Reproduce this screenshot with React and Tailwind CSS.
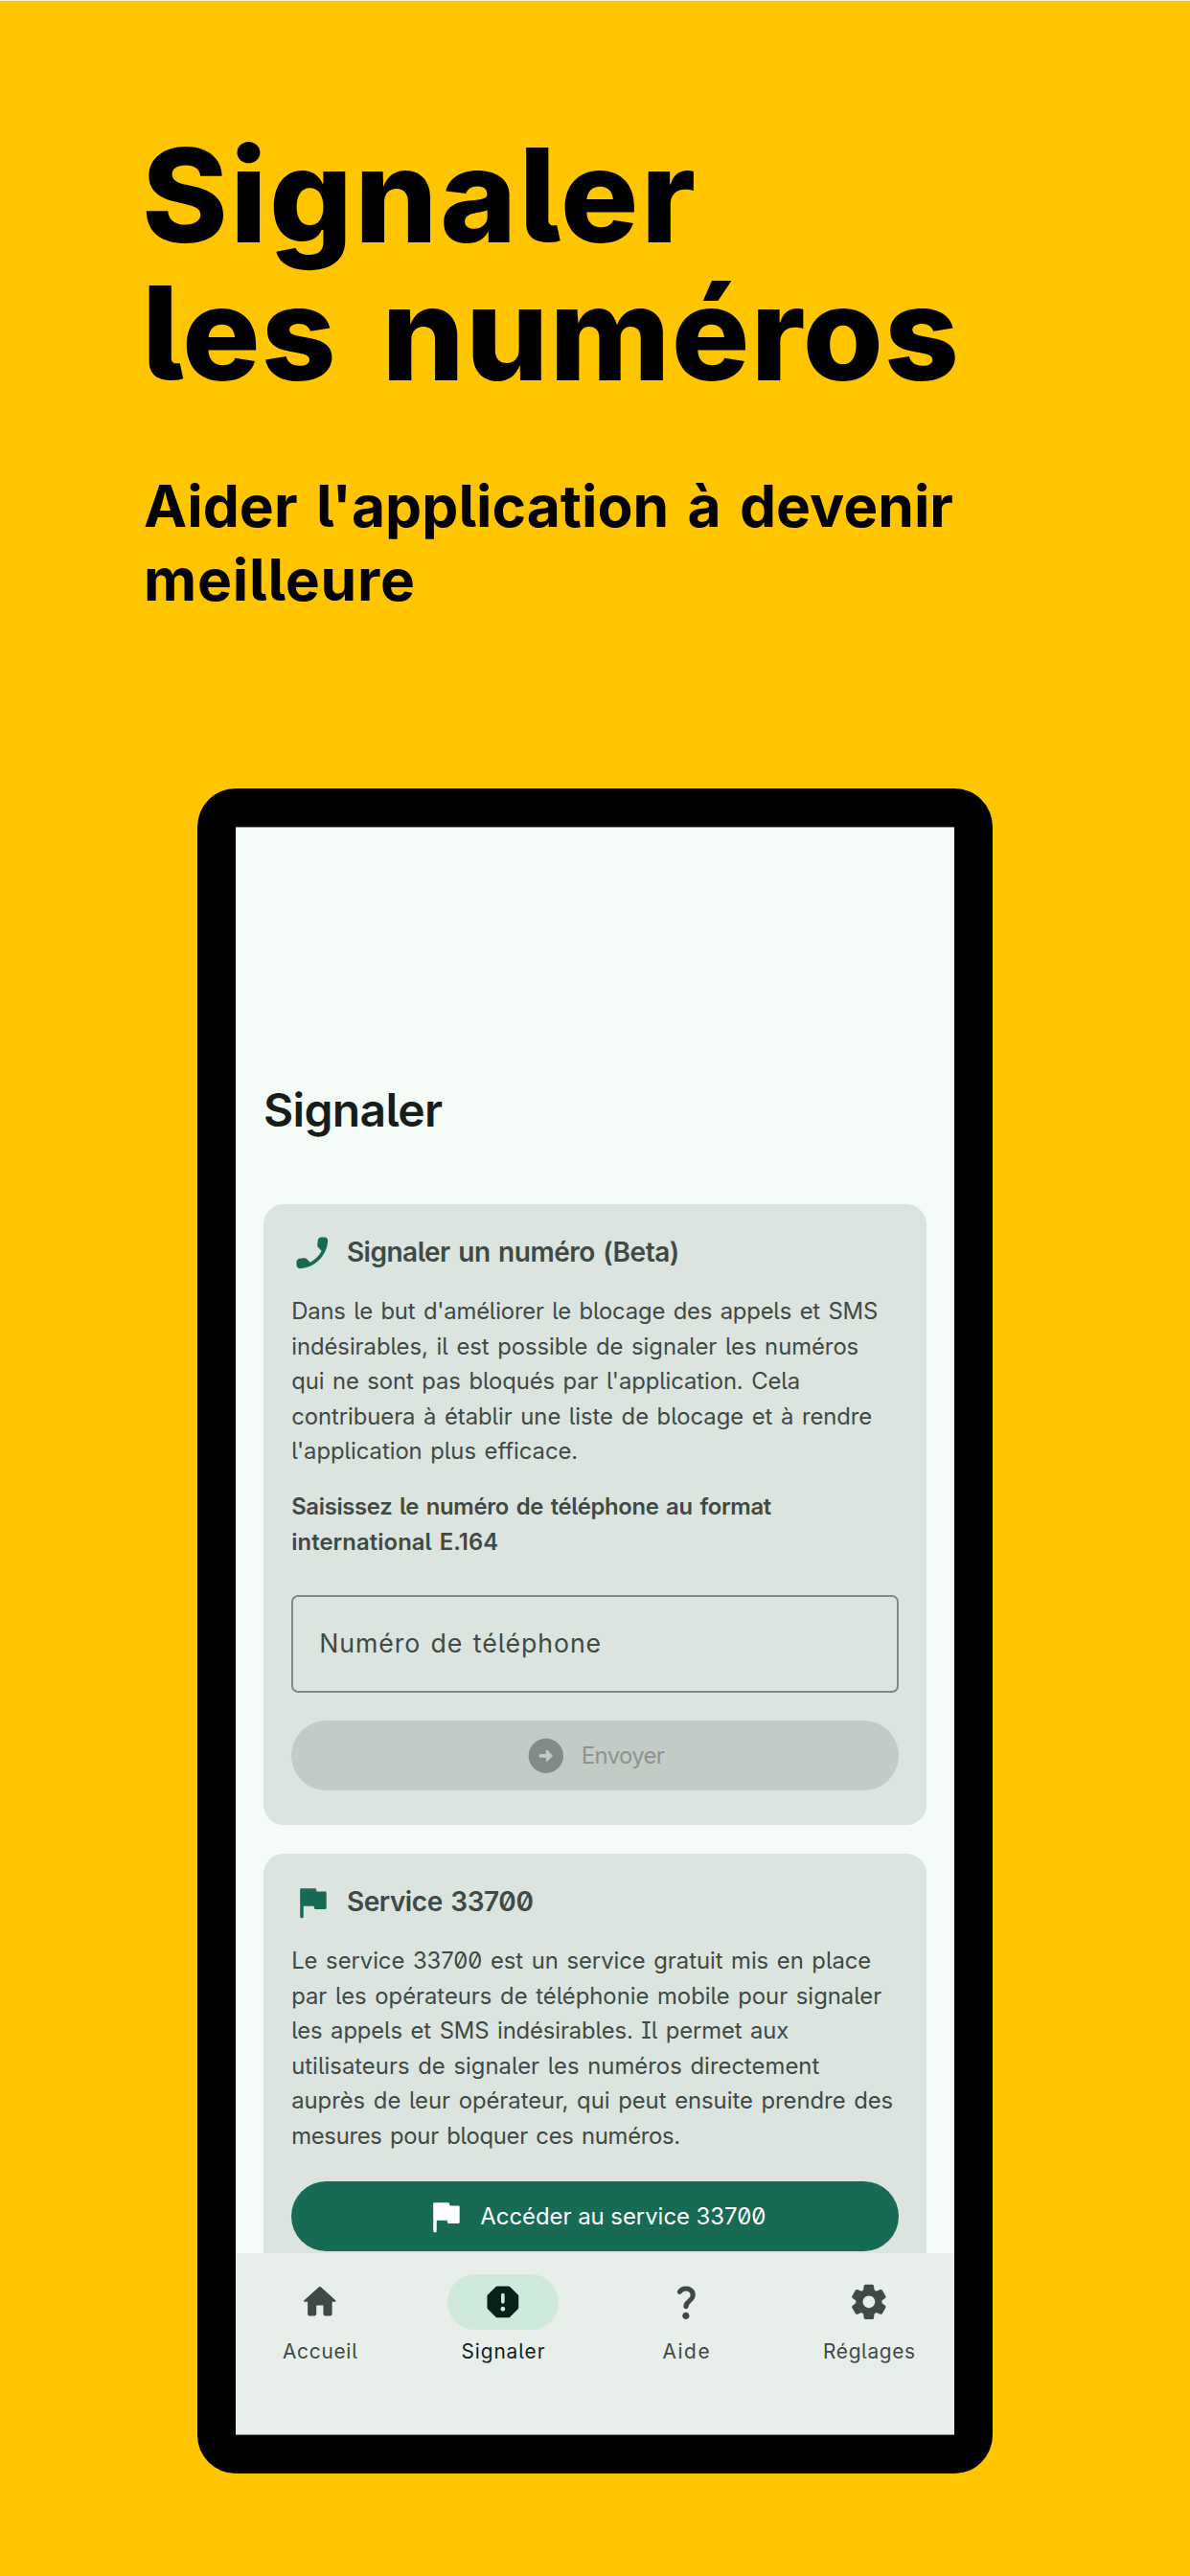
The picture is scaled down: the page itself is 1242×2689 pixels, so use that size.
import { useLayoutEffect, useRef } from "react";

// One line of text whose tracking is adjusted so that it spans `width` pixels.
function Line({ width, className = "", children }) {
  const ref = useRef(null);
  useLayoutEffect(() => {
    const el = ref.current;
    el.style.letterSpacing = "0px";
    const natural = el.getBoundingClientRect().width;
    const gaps = el.textContent.length - 1;
    el.style.letterSpacing = `${(width - natural) / gaps}px`;
  }, [width, children]);
  return (
    <span className={`block overflow-visible whitespace-nowrap ${className}`} style={{ width }}>
      <span ref={ref} className="inline-block">
        {children}
      </span>
    </span>
  );
}

const ICONS = {
  phone:
    "M19.23 15.26l-2.54-.29c-.61-.07-1.21.14-1.64.57l-1.84 1.84c-2.83-1.44-5.15-3.75-6.59-6.59l1.85-1.85c.43-.43.64-1.03.57-1.64l-.29-2.52c-.12-1.01-.97-1.77-1.99-1.77H5.03c-1.13 0-2.07.94-2 2.07.53 8.54 7.36 15.36 15.89 15.89 1.13.07 2.07-.87 2.07-2v-1.73c.01-1.01-.75-1.86-1.76-1.98z",
  flag: "M5.5 4h8.2c.3 0 .52.2.58.5l.32 1.3h4.9c.4 0 .65.25.65.6v8.9c0 .4-.25.65-.65.65h-5.7c-.3 0-.5-.2-.57-.5L12.9 14.1H7v6.1c0 .5-.4.85-.95.85S5.05 20.7 5.05 20.2V4.5c0-.3.15-.5.45-.5z",
  send: "M12 2c5.52 0 10 4.48 10 10s-4.48 10-10 10S2 17.52 2 12 6.48 2 12 2zm0 9H9c-.55 0-1 .45-1 1s.45 1 1 1h3v1.79c0 .45.54.67.85.35l2.79-2.79c.2-.2.2-.51 0-.71l-2.79-2.79c-.31-.31-.85-.09-.85.36V11z",
  home: "M10 19v-5h4v5c0 .55.45 1 1 1h3c.55 0 1-.45 1-1v-7h1.7c.46 0 .68-.57.33-.87L12.67 3.6c-.38-.34-.96-.34-1.34 0l-8.36 7.53c-.34.3-.13.87.33.87H5v7c0 .55.45 1 1 1h3c.55 0 1-.45 1-1z",
  report:
    "M15.32 3H8.68c-.26 0-.52.11-.7.29L3.29 7.98c-.18.18-.29.44-.29.7v6.63c0 .27.11.52.29.71l4.68 4.68c.19.19.45.3.71.3h6.63c.27 0 .52-.11.71-.29l4.68-4.68c.19-.19.29-.44.29-.71V8.68c0-.27-.11-.52-.29-.71l-4.68-4.68c-.18-.18-.44-.29-.7-.29zM12 17.3c-.72 0-1.3-.58-1.3-1.3s.58-1.3 1.3-1.3 1.3.58 1.3 1.3-.58 1.3-1.3 1.3zm0-4.3c-.55 0-1-.45-1-1V8c0-.55.45-1 1-1s1 .45 1 1v4c0 .55-.45 1-1 1z",
  help: "M7.92 7.54c-.8-.34-1.14-1.33-.66-2.05C8.23 4.05 9.85 3 11.99 3c2.35 0 3.96 1.07 4.78 2.41.7 1.15 1.11 3.3.03 4.9-1.2 1.77-2.35 2.31-2.97 3.45-.15.27-.24.49-.3.94-.09.73-.69 1.3-1.43 1.3-.87 0-1.58-.75-1.48-1.62.06-.51.18-1.04.46-1.54.77-1.39 2.25-2.21 3.11-3.44.91-1.29.4-3.7-2.18-3.7-1.17 0-1.93.61-2.4 1.34-.35.57-1.08.75-1.69.5zM14 20c0 1.1-.9 2-2 2s-2-.9-2-2 .9-2 2-2 2 .9 2 2z",
  settings:
    "M19.5 12c0-.23-.01-.45-.03-.68l1.86-1.41c.4-.3.51-.86.26-1.3l-1.87-3.23c-.25-.44-.79-.62-1.25-.42l-2.15.91c-.37-.26-.76-.49-1.17-.68l-.29-2.31C14.8 2.38 14.37 2 13.87 2h-3.73c-.51 0-.94.38-1 .88l-.29 2.31c-.41.19-.8.42-1.17.68l-2.15-.91c-.46-.2-1-.02-1.25.42L2.41 8.62c-.25.44-.14.99.26 1.3l1.86 1.41c-.02.22-.03.44-.03.67s.01.45.03.68l-1.86 1.41c-.4.3-.51.86-.26 1.3l1.87 3.23c.25.44.79.62 1.25.42l2.15-.91c.37.26.76.49 1.17.68l.29 2.31c.06.5.49.88.99.88h3.73c.5 0 .93-.38.99-.88l.29-2.31c.41-.19.8-.42 1.17-.68l2.15.91c.46.2 1 .02 1.25-.42l1.87-3.23c.25-.44.14-.99-.26-1.3l-1.86-1.41c.03-.23.04-.45.04-.68zm-7.46 3.5c-1.93 0-3.5-1.57-3.5-3.5s1.57-3.5 3.5-3.5 3.5 1.57 3.5 3.5-1.57 3.5-3.5 3.5z",
};

function Icon({ name, className = "" }) {
  return (
    <svg viewBox="0 0 24 24" className={`size-[43.7px] shrink-0 fill-current ${className}`} aria-hidden="true">
      <path fillRule="evenodd" d={ICONS[name]} />
    </svg>
  );
}

function CardTitle({ icon, iconClass = "", width, children }) {
  return (
    <div className="flex h-[43.7px] items-center gap-[14px] text-[28px] leading-[36px] font-semibold [word-spacing:2px]">
      <Icon name={icon} className={`text-[#176b55] ${iconClass}`} />
      <h3 className="pb-px">
        <Line width={width}>{children}</Line>
      </h3>
    </div>
  );
}

function Paragraph({ lines, className = "" }) {
  return (
    <p className={`text-[23.8px] leading-[36.5px] [word-spacing:2px] ${className}`}>
      {lines.map(([text, width], i) => (
        <Line key={i} width={width}>
          {text}
        </Line>
      ))}
    </p>
  );
}

const REPORT_LINES = [
  ["Dans le but d'améliorer le blocage des appels et SMS", 612],
  ["indésirables, il est possible de signaler les numéros", 592],
  ["qui ne sont pas bloqués par l'application. Cela", 531],
  ["contribuera à établir une liste de blocage et à rendre", 606],
  ["l'application plus efficace.", 299],
];

const FORMAT_LINES = [
  ["Saisissez le numéro de téléphone au format", 501],
  ["international E.164", 216],
];

const SERVICE_LINES = [
  ["Le service 33700 est un service gratuit mis en place", 605],
  ["par les opérateurs de téléphonie mobile pour signaler", 616],
  [
    <>
      les appels et SMS indésirables. <span className="[font-feature-settings:'cv05','zero','cv08']">I</span>l permet aux
    </>,
    519,
  ],
  ["utilisateurs de signaler les numéros directement", 551],
  ["auprès de leur opérateur, qui peut ensuite prendre des", 628],
  ["mesures pour bloquer ces numéros.", 406],
];

const TABS = [
  { icon: "home", label: "Accueil", width: 78 },
  { icon: "report", label: "Signaler", width: 87, active: true },
  { icon: "help", label: "Aide", width: 49 },
  { icon: "settings", label: "Réglages", width: 96 },
];

export default function App() {
  return (
    <div className="h-[2689px] w-[1242px] overflow-hidden border-t border-[#fff4cf] bg-[#ffc600] font-['Inter',sans-serif] text-black [font-feature-settings:'cv05','zero']">
      <header className="h-[822px] pt-[131px] pl-[148px]">
        <h1 className="text-[136px] leading-[144px] font-extrabold [word-spacing:16px]">
          <Line width={578}>Signaler</Line>
          <Line width={853}>les numéros</Line>
        </h1>
        <h2 className="mt-[70px] pl-[2px] text-[60.5px] leading-[77px] font-bold [word-spacing:5px]">
          <Line width={845}>Aider l'application à devenir</Line>
          <Line width={283}>meilleure</Line>
        </h2>
      </header>

      <div className="ml-[206px] h-[1759px] w-[830px] rounded-[40px] bg-black p-[40px]">
        <div className="flex h-full flex-col overflow-hidden border-y border-[#8a8e8b] bg-[#f5fbf7] text-[#3f4945]">
          <main className="min-h-0 flex-1 overflow-hidden px-[29px] pt-[265px]">
            <h2 className="text-[48px] leading-[60px] font-semibold text-[#171d1a]">
              <Line width={187}>Signaler</Line>
            </h2>

            <section className="mt-[67.6px] rounded-[21px] bg-[#dbe4df] px-[29.2px] pt-[29.2px] pb-[36.3px]">
              <CardTitle icon="phone" iconClass="-scale-x-100" width={347}>
                Signaler un numéro (Beta)
              </CardTitle>
              <Paragraph lines={REPORT_LINES} className="mt-[22px]" />
              <Paragraph lines={FORMAT_LINES} className="mt-[21.5px] font-semibold" />
              <div className="mt-[36.5px] flex h-[102px] items-center rounded-[7px] border-2 border-[#808b86] pb-px pl-[27px] text-[26.7px] leading-[36px] [word-spacing:2px]">
                <Line width={294}>Numéro de téléphone</Line>
              </div>
              <div className="mt-[29px] flex h-[73px] items-center justify-center gap-[15px] rounded-full bg-[#c3cbc6] text-[23.9px] leading-[36px] text-[#8b948f]">
                <Icon name="send" className="text-[#828b86]" />
                <Line width={87} className="pt-px">
                  Envoyer
                </Line>
              </div>
            </section>

            <section className="mt-[29.3px] rounded-t-[21px] bg-[#dbe4df] px-[29.2px] pt-[29.2px] pb-[36.3px]">
              <CardTitle icon="flag" width={195}>
                Service 33700
              </CardTitle>
              <Paragraph lines={SERVICE_LINES} className="mt-[21.8px]" />
              <div className="mt-[28.8px] flex h-[73px] items-center justify-center gap-[15px] rounded-full bg-[#176b55] text-[23.9px] leading-[36px] text-white">
                <Icon name="flag" />
                <Line width={298} className="pt-px">
                  Accéder au service 33700
                </Line>
              </div>
            </section>
          </main>

          <nav className="grid h-[189px] shrink-0 grid-cols-4 gap-x-[15.2px] bg-[#e8eeea] pt-[22px] pr-px">
            {TABS.map((tab) => (
              <div key={tab.label} className="flex flex-col items-center">
                <div
                  className={`flex h-[58px] w-[116px] items-center justify-center rounded-full ${
                    tab.active ? "bg-[#cfe9dc] text-[#08201a]" : ""
                  }`}
                >
                  <Icon name={tab.icon} />
                </div>
                <Line
                  width={tab.width}
                  className={`mt-[7.5px] text-[20.8px] leading-[30px] ${tab.active ? "text-[#171d1a]" : ""}`}
                >
                  {tab.label}
                </Line>
              </div>
            ))}
          </nav>
        </div>
      </div>
    </div>
  );
}
